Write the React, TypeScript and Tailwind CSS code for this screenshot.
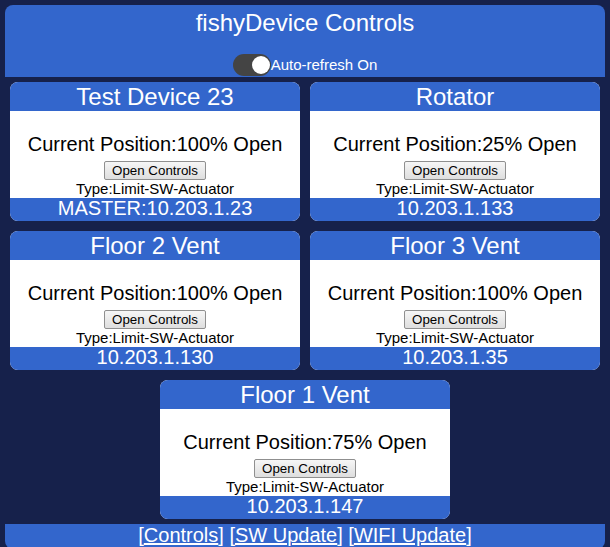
import React from 'react';

type Device = {
  name: string;
  position: string;
  ip: string;
};

const devices: Device[] = [
  { name: 'Test Device 23', position: '100%', ip: 'MASTER:10.203.1.23' },
  { name: 'Rotator', position: '25%', ip: '10.203.1.133' },
  { name: 'Floor 2 Vent', position: '100%', ip: '10.203.1.130' },
  { name: 'Floor 3 Vent', position: '100%', ip: '10.203.1.35' },
  { name: 'Floor 1 Vent', position: '75%', ip: '10.203.1.147' },
];

function DeviceCard({ device }: { device: Device }) {
  return (
    <div className="m-[5px] w-[290px] rounded-lg overflow-hidden bg-white text-center">
      <div className="h-[29px] bg-[#3366cc] text-white text-[24px] leading-[29px]">
        {device.name}
      </div>
      <div className="h-[87px] flex flex-col items-center pt-[22px]">
        <div className="text-[20px] leading-[23px] text-black">
          Current Position:{device.position} Open
        </div>
        <button className="mt-[5px] h-[19px] w-[102px] flex items-center justify-center rounded-[2px] border border-[#8f8f8f] bg-gradient-to-b from-[#f6f6f6] to-[#dedede] text-[13.33px] text-black">
          Open Controls
        </button>
        <div className="text-[15px] leading-[18px] text-black">Type:Limit-SW-Actuator</div>
      </div>
      <div className="h-[23px] bg-[#3366cc] text-white text-[20px] leading-[20px]">
        {device.ip}
      </div>
    </div>
  );
}

export default function App() {
  return (
    <div
      className="min-h-screen bg-[#16214b] p-[5px] pb-0 overflow-hidden"
      style={{ fontFamily: '"Liberation Sans", Arial, sans-serif' }}
    >
      {/* Header */}
      <div className="h-[72px] rounded-t-lg bg-[#3366cc] text-white flex flex-col items-center">
        <div className="text-[24px] leading-[24px] mt-[6px]">fishyDevice Controls</div>
        <div className="flex items-center mt-[19px]">
          <div className="relative h-[22px] w-[38px] rounded-full bg-[#444444]">
            <div className="absolute right-[1px] top-[2px] h-[18px] w-[18px] rounded-full bg-white" />
          </div>
          <span className="text-[15px] leading-[18px]">Auto-refresh On</span>
        </div>
      </div>

      {/* Devices */}
      <div className="flex flex-wrap justify-center">
        {devices.map((d) => (
          <DeviceCard key={d.name} device={d} />
        ))}
      </div>

      {/* Footer */}
      <div className="h-[25px] rounded-b-lg bg-[#3366cc] text-white text-[20px] leading-[23px] text-center">
        [<a href="#" className="underline">Controls</a>] [
        <a href="#" className="underline">SW Update</a>] [
        <a href="#" className="underline">WIFI Update</a>]
      </div>
    </div>
  );
}
